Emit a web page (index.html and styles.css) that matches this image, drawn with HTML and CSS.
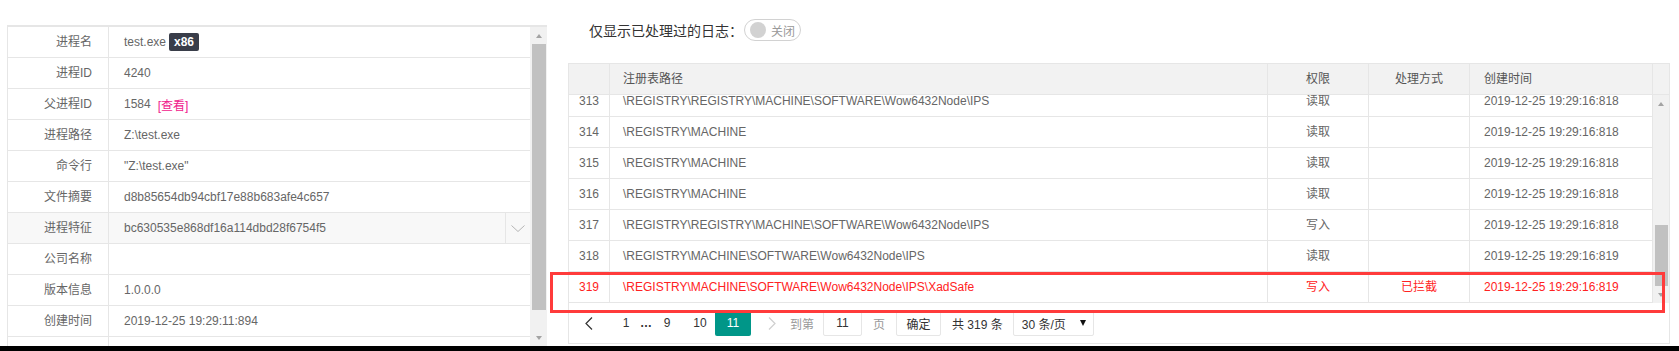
FILE: index.html
```html
<!DOCTYPE html>
<html lang="zh-CN">
<head>
<meta charset="utf-8">
<title>进程详情</title>
<link rel="stylesheet" href="styles.css">
</head>
<body>
<div class="page">
  <div class="main">
    <section class="proc">
      <div class="proc-table">
        <div class="prow"><div class="plabel">进程名</div><div class="pvalue">test.exe<span class="badge">x86</span></div></div>
        <div class="prow"><div class="plabel">进程ID</div><div class="pvalue">4240</div></div>
        <div class="prow"><div class="plabel">父进程ID</div><div class="pvalue">1584<span class="link">[查看]</span></div></div>
        <div class="prow"><div class="plabel">进程路径</div><div class="pvalue">Z:\test.exe</div></div>
        <div class="prow"><div class="plabel">命令行</div><div class="pvalue">"Z:\test.exe"</div></div>
        <div class="prow"><div class="plabel">文件摘要</div><div class="pvalue">d8b85654db94cbf17e88b683afe4c657</div></div>
        <div class="prow prow-hl"><div class="plabel">进程特征</div><div class="pvalue">bc630535e868df16a114dbd28f6754f5<span class="more"><svg width="14" height="7" viewBox="0 0 14 7"><polyline points="0.5,0.5 7,6.5 13.5,0.5" fill="none" stroke="#b5b5b5" stroke-width="1"/></svg></span></div></div>
        <div class="prow"><div class="plabel">公司名称</div><div class="pvalue"></div></div>
        <div class="prow"><div class="plabel">版本信息</div><div class="pvalue">1.0.0.0</div></div>
        <div class="prow"><div class="plabel">创建时间</div><div class="pvalue">2019-12-25 19:29:11:894</div></div>
        <div class="prow"><div class="plabel"></div><div class="pvalue"></div></div>
      </div>
      <div class="vscroll">
        <div class="arrow arrow-up"></div>
        <div class="thumb thumb-left"></div>
        <div class="track"></div>
        <div class="arrow arrow-down"></div>
      </div>
    </section>

    <section class="log">
      <div class="filter">仅显示已处理过的日志：<span class="switch"><i></i><em>关闭</em></span></div>
      <div class="grid">
        <div class="ghead">
          <div class="c num"></div>
          <div class="c path">注册表路径</div>
          <div class="c perm">权限</div>
          <div class="c act">处理方式</div>
          <div class="c time">创建时间</div>
          <div class="c gutter"></div>
        </div>
        <div class="gbody">
          <div class="viewport">
            <div class="rows">
              <div class="grow"><div class="c num">313</div><div class="c path">\REGISTRY\REGISTRY\MACHINE\SOFTWARE\Wow6432Node\IPS</div><div class="c perm">读取</div><div class="c act"></div><div class="c time">2019-12-25 19:29:16:818</div></div>
              <div class="grow"><div class="c num">314</div><div class="c path">\REGISTRY\MACHINE</div><div class="c perm">读取</div><div class="c act"></div><div class="c time">2019-12-25 19:29:16:818</div></div>
              <div class="grow"><div class="c num">315</div><div class="c path">\REGISTRY\MACHINE</div><div class="c perm">读取</div><div class="c act"></div><div class="c time">2019-12-25 19:29:16:818</div></div>
              <div class="grow"><div class="c num">316</div><div class="c path">\REGISTRY\MACHINE</div><div class="c perm">读取</div><div class="c act"></div><div class="c time">2019-12-25 19:29:16:818</div></div>
              <div class="grow"><div class="c num">317</div><div class="c path">\REGISTRY\REGISTRY\MACHINE\SOFTWARE\Wow6432Node\IPS</div><div class="c perm">写入</div><div class="c act"></div><div class="c time">2019-12-25 19:29:16:818</div></div>
              <div class="grow"><div class="c num">318</div><div class="c path">\REGISTRY\MACHINE\SOFTWARE\Wow6432Node\IPS</div><div class="c perm">读取</div><div class="c act"></div><div class="c time">2019-12-25 19:29:16:819</div></div>
              <div class="grow grow-alert"><div class="c num">319</div><div class="c path">\REGISTRY\MACHINE\SOFTWARE\Wow6432Node\IPS\XadSafe</div><div class="c perm">写入</div><div class="c act">已拦截</div><div class="c time">2019-12-25 19:29:16:819</div></div>
            </div>
          </div>
          <div class="vscroll vscroll-right">
            <div class="arrow arrow-up"></div>
            <div class="track track-right"></div>
            <div class="thumb thumb-right"></div>
            <div class="arrow arrow-down"></div>
          </div>
        </div>
        <div class="pager">
          <span class="pg pg-prev"><svg width="8" height="13" viewBox="0 0 8 13"><polyline points="7,0.5 1,6.5 7,12.5" fill="none" stroke="#333" stroke-width="1.2"/></svg></span>
          <span class="pg pg-1">1</span>
          <span class="pg pg-dots">…</span>
          <span class="pg pg-9">9</span>
          <span class="pg pg-10">10</span>
          <span class="pg pg-cur">11</span>
          <span class="pg pg-next"><svg width="8" height="13" viewBox="0 0 8 13"><polyline points="1,0.5 7,6.5 1,12.5" fill="none" stroke="#cfcfcf" stroke-width="1.2"/></svg></span>
          <span class="pg pg-label pg-goto">到第</span>
          <span class="pg pg-input">11</span>
          <span class="pg pg-label pg-page">页</span>
          <span class="pg pg-btn">确定</span>
          <span class="pg pg-count">共 319 条</span>
          <span class="pg pg-select">30 条/页<i class="caret"></i></span>
        </div>
      </div>
    </section>
  </div>
  <div class="bottom-bar"></div>
  <div class="highlight"></div>
</div>
</body>
</html>
```

FILE: styles.css
```css
* { box-sizing: border-box; }

html, body {
  margin: 0;
  padding: 0;
  background: #fff;
}

body {
  font-family: "Liberation Sans", Arial, "Noto Sans CJK SC", sans-serif;
  font-size: 12px;
  color: #666;
}

.page {
  position: relative;
  width: 1679px;
  height: 351px;
  overflow: hidden;
  display: flex;
  flex-direction: column;
}

.main {
  height: 346px;
  display: flex;
  align-items: flex-start;
  overflow: hidden;
}

.bottom-bar {
  height: 5px;
  background: #000;
}

/* ---------- left process panel ---------- */
.proc {
  margin: 25px 0 0 7px;
  width: 540px;
  height: 321px;
  border-top: 2px solid #e6e6e6;
  display: flex;
  overflow: hidden;
}

.proc-table {
  width: 523px;
  border-left: 1px solid #e6e6e6;
}

.prow {
  display: flex;
  height: 31px;
  border-bottom: 1px solid #e6e6e6;
}

.prow-hl { background: #f8f8f8; }

.plabel {
  width: 101px;
  border-right: 1px solid #e6e6e6;
  text-align: right;
  padding-right: 16px;
  line-height: 30px;
  white-space: nowrap;
}

.pvalue {
  flex: 1;
  display: flex;
  align-items: center;
  padding-left: 15px;
  height: 30px;
  white-space: nowrap;
}

.badge {
  margin-left: 3px;
  height: 18px;
  width: 30px;
  line-height: 18px;
  text-align: center;
  background: #393d49;
  color: #fff;
  border-radius: 2px;
  font-weight: bold;
}

.link {
  margin-left: 7px;
  color: #f0208c;
}

.more {
  margin-left: auto;
  width: 25px;
  height: 30px;
  border-left: 1px solid #e6e6e6;
  display: flex;
  align-items: center;
  justify-content: center;
}

/* ---------- scrollbars ---------- */
.vscroll {
  width: 17px;
  display: flex;
  flex-direction: column;
  background: #f1f1f1;
}

.vscroll-right {
  width: 16px;
  height: 208px;
}

.arrow {
  height: 17px;
  display: flex;
  align-items: center;
  justify-content: center;
}

.arrow-up::after {
  content: "";
  border-left: 3.5px solid transparent;
  border-right: 3.5px solid transparent;
  border-bottom: 4px solid #a3a3a3;
}

.arrow-down::after {
  content: "";
  border-left: 3.5px solid transparent;
  border-right: 3.5px solid transparent;
  border-top: 4px solid #a3a3a3;
}

.thumb {
  background: #c1c1c1;
  margin: 0 1px 0 2px;
}

.thumb-left { height: 266px; }
.track { flex: 1; }
.track-right { flex: none; height: 113px; }
.thumb-right { height: 61px; }

/* ---------- right log panel ---------- */
.log {
  margin-left: 21px;
  width: 1102px;
}

.filter {
  height: 22px;
  margin: 19px 0 22px;
  padding-left: 21px;
  display: flex;
  align-items: center;
  font-size: 14px;
  color: #333;
  white-space: nowrap;
}

.switch {
  margin-left: 1px;
  height: 22px;
  padding: 0 5px;
  display: inline-flex;
  align-items: center;
  border: 1px solid #d2d2d2;
  border-radius: 20px;
}

.switch i {
  width: 16px;
  height: 16px;
  border-radius: 50%;
  background: #d2d2d2;
}

.switch em {
  margin-left: 5px;
  font-style: normal;
  font-size: 12px;
  color: #999;
}

.grid {
  width: 1102px;
  border: 1px solid #e6e6e6;
}

.ghead {
  display: flex;
  height: 31px;
  background: #f2f2f2;
  border-bottom: 1px solid #e6e6e6;
  color: #555;
}

.c {
  height: 30px;
  line-height: 30px;
  border-right: 1px solid #e6e6e6;
  white-space: nowrap;
  overflow: hidden;
}

.num { width: 41px; text-align: center; }
.path { width: 658px; padding-left: 13px; }
.perm { width: 101px; text-align: center; }
.act { width: 101px; text-align: center; }
.time { width: 183px; padding-left: 14px; }
.gutter { width: 16px; border-right: 0; }

.gbody {
  display: flex;
  height: 208px;
}

.viewport {
  width: 1084px;
  height: 208px;
  overflow: hidden;
}

.rows { margin-top: -9px; }

.grow {
  display: flex;
  height: 31px;
  border-bottom: 1px solid #e6e6e6;
}

.grow-alert { color: #ff2222; }

/* ---------- pager ---------- */
.pager {
  height: 40px;
  padding-top: 7px;
  display: flex;
  align-items: flex-start;
  color: #333;
}

.pg {
  height: 26px;
  display: flex;
  align-items: center;
  justify-content: center;
  white-space: nowrap;
}

.pg-prev { margin-left: 9px; width: 22px; }
.pg-1 { margin-left: 16px; width: 20px; }
.pg-dots { width: 20px; font-weight: bold; }
.pg-9 { margin-left: 1px; width: 20px; }
.pg-10 { margin-left: 11px; width: 24px; }

.pg-cur {
  margin-left: 3px;
  width: 36px;
  background: #009688;
  color: #fff;
  border-radius: 2px;
}

.pg-next { margin-left: 10px; width: 22px; }
.pg-label { color: #999; }
.pg-goto { margin-left: 7px; }

.pg-input {
  margin-left: 9px;
  width: 39px;
  border: 1px solid #e6e6e6;
  border-radius: 2px;
}

.pg-page { margin-left: 11px; }

.pg-btn {
  margin-left: 11px;
  width: 45px;
  border: 1px solid #e6e6e6;
  border-radius: 2px;
}

.pg-count { margin-left: 11px; }

.pg-select {
  margin-left: 10px;
  width: 81px;
  padding: 0 7px 0 8px;
  justify-content: space-between;
  border: 1px solid #e6e6e6;
  border-radius: 2px;
}

.caret {
  width: 0;
  height: 0;
  border-left: 3.5px solid transparent;
  border-right: 3.5px solid transparent;
  border-top: 6px solid #111;
}

/* ---------- annotation overlay ---------- */
.highlight {
  position: absolute;
  left: 550px;
  top: 272px;
  width: 1115px;
  height: 41px;
  border: 3px solid #ff3b3b;
}
```
